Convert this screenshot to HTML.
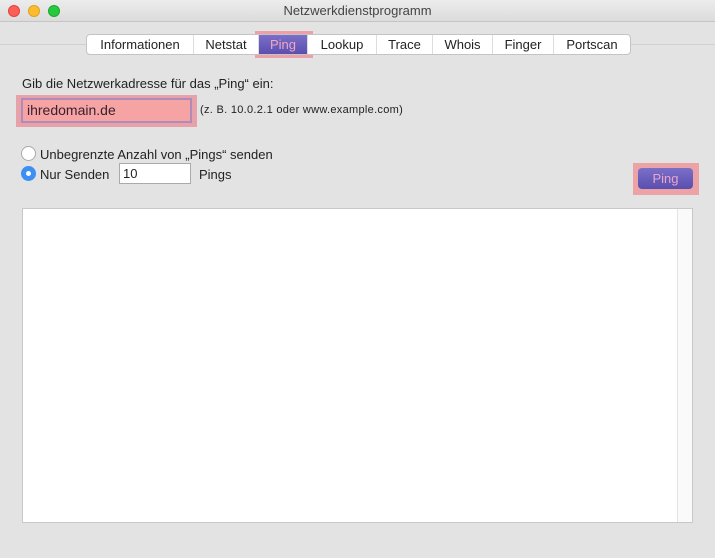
<!DOCTYPE html>
<html><head><style>
*{margin:0;padding:0;box-sizing:border-box}
body{width:715px;height:558px;background:#e3e3e3;font-family:"Liberation Sans",sans-serif;color:#222;position:relative;overflow:hidden}
.abs{position:absolute}
#title{left:0;top:0;width:715px;height:22px;background:linear-gradient(#ececec,#dcdcdc);border-bottom:1px solid #c4c4c4;text-align:center;font-size:13px;line-height:22px;color:#444}
.dot{top:5px;width:12px;height:12px;border-radius:50%}
#tabs{left:86px;top:34px;height:21px;width:545px;display:flex;background:#fff;border:1px solid #c4c4c4;border-radius:4px;font-size:13px}
#tabs div{text-align:center;line-height:19px;border-right:1px solid #ddd}
#tabs div:last-child{border-right:none}
#tabs .sel{background:linear-gradient(#7b6fc8,#5a4eb0);color:#f0a8c0}
</style></head><body>
<div id="title" class="abs">Netzwerkdienstprogramm</div>
<div class="abs dot" style="left:8px;background:#fc5f57;border:1px solid #e0443e"></div>
<div class="abs dot" style="left:28px;background:#fdbc2e;border:1px solid #dea123"></div>
<div class="abs dot" style="left:48px;background:#28c840;border:1px solid #1aab29"></div>
<div class="abs" style="left:0;top:44px;width:715px;height:1px;background:#d0d0d0"></div>
<div class="abs" style="left:255px;top:31px;width:58px;height:27px;background:#eca0a8"></div>
<div id="tabs" class="abs"><div style="width:107px">Informationen</div><div style="width:65px">Netstat</div><div class="sel" style="width:49px">Ping</div><div style="width:69px">Lookup</div><div style="width:56px">Trace</div><div style="width:60px">Whois</div><div style="width:61px">Finger</div><div style="width:76px">Portscan</div></div>
<div class="abs" style="left:22px;top:76px;font-size:13px">Gib die Netzwerkadresse für das „Ping“ ein:</div>
<div class="abs" style="left:16px;top:95px;width:181px;height:32px;background:#e6a2a8"></div>
<div class="abs" style="left:21px;top:98px;width:171px;height:25px;background:#f5a3a3;border:2px solid #b08ab8;font-size:14px;padding:2px 4px;color:#3a2030">ihredomain.de</div>
<div class="abs" style="left:200px;top:104px;font-size:11px;letter-spacing:0.3px">(z. B. 10.0.2.1 oder www.example.com)</div>
<div class="abs" style="left:21px;top:146px;width:15px;height:15px;border-radius:50%;background:#fff;border:1px solid #aaa"></div>
<div class="abs" style="left:40px;top:147px;font-size:13px">Unbegrenzte Anzahl von „Pings“ senden</div>
<div class="abs" style="left:21px;top:166px;width:15px;height:15px;border-radius:50%;background:#3d8ef5"></div>
<div class="abs" style="left:26px;top:171px;width:5px;height:5px;border-radius:50%;background:#fff"></div>
<div class="abs" style="left:40px;top:167px;font-size:13px">Nur Senden</div>
<div class="abs" style="left:119px;top:163px;width:72px;height:21px;background:#fff;border:1px solid #aaa;font-size:13px;padding:2px 3px">10</div>
<div class="abs" style="left:199px;top:167px;font-size:13px">Pings</div>
<div class="abs" style="left:633px;top:163px;width:66px;height:32px;background:#eba3a6"></div>
<div class="abs" style="left:638px;top:168px;width:55px;height:21px;border-radius:4px;background:linear-gradient(#7b6fc8,#5a4eb0);color:#eaa6c8;font-size:13px;text-align:center;line-height:21px">Ping</div>
<div class="abs" style="left:22px;top:208px;width:671px;height:315px;background:#fff;border:1px solid #c8c8c8"></div>
<div class="abs" style="left:677px;top:209px;width:15px;height:313px;background:#fafafa;border-left:1px solid #e4e4e4"></div>
</body></html>
